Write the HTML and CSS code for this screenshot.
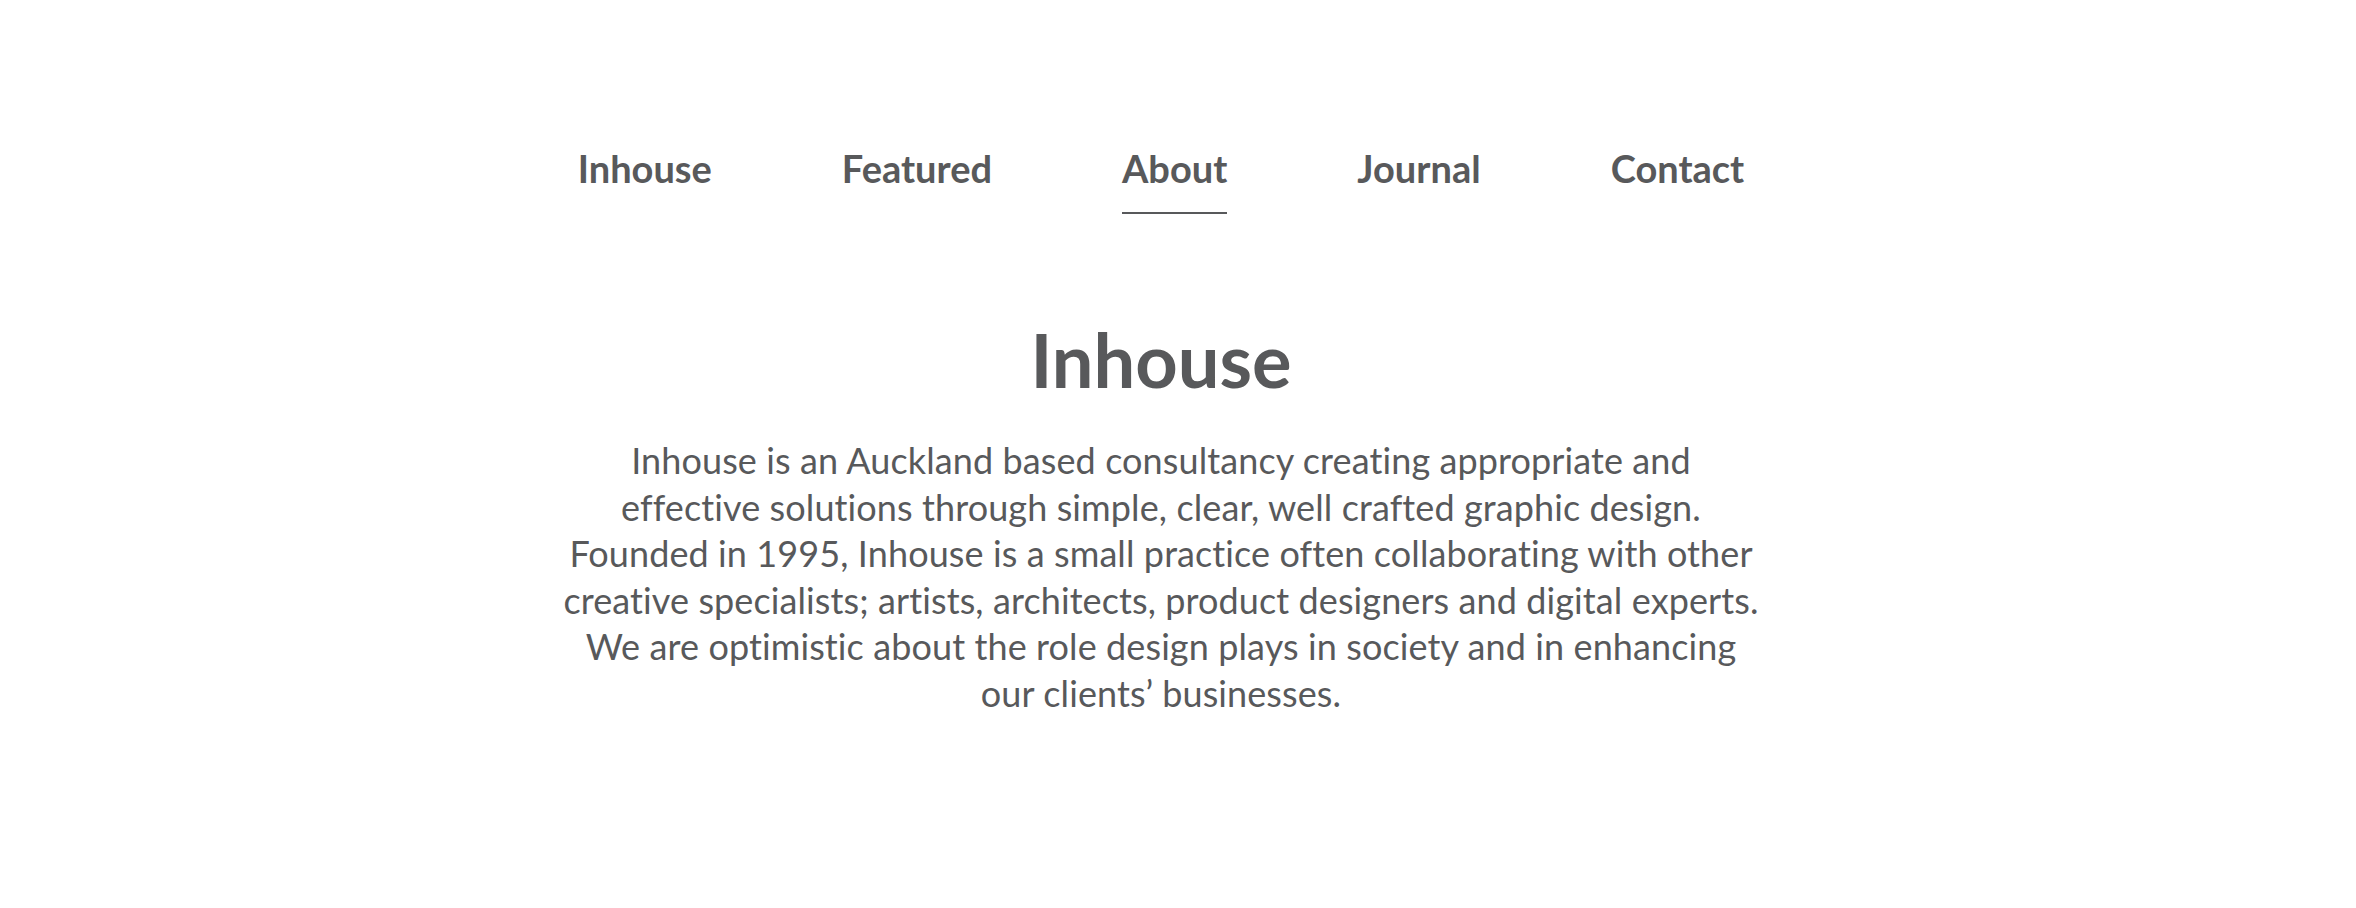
FILE: index.html
```html
<!DOCTYPE html>
<html lang="en">
<head>
<meta charset="utf-8">
<title>Inhouse — About</title>
<link rel="stylesheet" href="styles.css">
</head>
<body>
<div class="page">
  <nav class="nav">
    <a class="nav-link" href="#">Inhouse</a>
    <a class="nav-link" href="#">Featured</a>
    <a class="nav-link active" href="#">About</a>
    <a class="nav-link" href="#">Journal</a>
    <a class="nav-link" href="#">Contact</a>
  </nav>
  <main class="about">
    <h1 class="title">Inhouse</h1>
    <p class="intro">Inhouse is an Auckland based consultancy creating appropriate and<br>
    effective solutions through simple, clear, well crafted graphic design.<br>
    Founded in 1995, Inhouse is a small practice often collaborating with other<br>
    creative specialists; artists, architects, product designers and digital experts.<br>
    We are optimistic about the role design plays in society and in enhancing<br>
    our clients’ businesses.</p>
  </main>
</div>
</body>
</html>
```
FILE: styles.css
```css
html, body {
  margin: 0;
  padding: 0;
  background: #ffffff;
}

body {
  font-family: Lato, "Liberation Sans", sans-serif;
  color: #58595b;
}

.page {
  padding: 149px 34px 0 0;
}

.nav {
  display: flex;
  justify-content: center;
  align-items: flex-start;
  gap: 130px;
}

.nav-link {
  font-size: 38px;
  font-weight: 700;
  line-height: 1;
  color: #58595b;
  text-decoration: none;
  padding-bottom: 25px;
  border-bottom: 2px solid transparent;
}

.nav-link.active {
  border-bottom-color: #58595b;
}

.about {
  text-align: center;
  margin-top: 109px;
}

.title {
  margin: 0;
  font-size: 74px;
  font-weight: 700;
  line-height: 1;
}

.intro {
  margin: 40px 0 0;
  font-size: 36px;
  font-weight: 400;
  line-height: 46.5px;
  letter-spacing: 0.1px;
}
```
